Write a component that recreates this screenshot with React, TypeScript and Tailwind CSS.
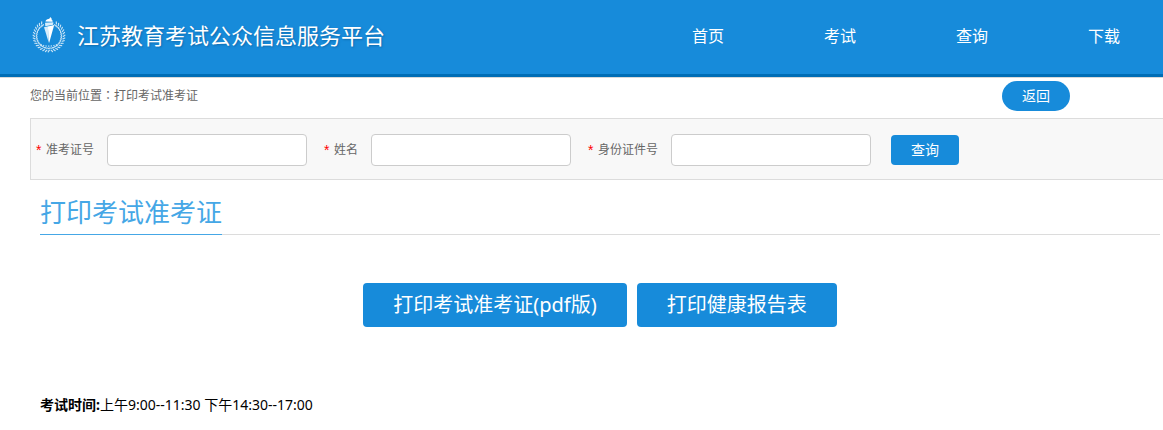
import { FormEvent, useState } from "react";

type Field = {
  id: string;
  label: string;
};

const navItems = ["首页", "考试", "查询", "下载"];

const fields: Field[] = [
  { id: "ticket", label: "准考证号" },
  { id: "name", label: "姓名" },
  { id: "idCard", label: "身份证件号" },
];

const leafAngles = Array.from({ length: 31 }, (_, i) => 30 + i * 10);

function Emblem() {
  return (
    <svg viewBox="0 0 36 38" className="h-[38px] w-9 shrink-0" fill="none" aria-hidden="true">
      <g stroke="#fff" strokeLinecap="round" opacity="0.75">
        {leafAngles.map((angle) => (
          <path
            key={angle}
            transform={`rotate(${angle} 18 20)`}
            d={angle < 180 ? "M18.4 5.8l-1.2-1.7M17.2 7.4l1.4.5" : "M17.6 5.8l1.2-1.7M18.8 7.4l-1.4.5"}
            strokeWidth="1.2"
          />
        ))}
      </g>
      <path d="M9.5 28.2c5 2.6 12 2.6 17 0" stroke="#fff" strokeWidth="1.2" strokeDasharray="1.4 1.2" opacity="0.7" />
      <path d="M14.4 5.6c.4-1.6 1.6-2.1 3-2.5 1.2-.4 1.7-1.1 1.6-2 1.6.8 2 2 1.7 2.8 1.1.1 1.1 1.1.8 1.9z" fill="#fff" />
      <path d="M14 6.8l8.4-.5-.3 2.4-7.8 1.6z" fill="#d7edfb" />
      <path d="M13 11.2l4.4-.9.5 16.7z" fill="#d7edfb" />
      <path d="M16.9 10.4l6.3-1.4-5.1 18z" fill="#fff" />
    </svg>
  );
}

export default function App() {
  const [values, setValues] = useState<Record<string, string>>({});

  function handleSubmit(event: FormEvent<HTMLFormElement>) {
    event.preventDefault();
  }

  return (
    <div className="bg-white font-['Noto_Sans','Noto_Sans_CJK_SC',sans-serif] text-sm text-black" lang="zh-CN">
      <header className="flex h-[78px] items-start justify-between border-b border-[#d9d9d9] bg-[#178bda] pr-[43px] pl-[31px] shadow-[inset_0_-3px_0_#006db5]">
        <div className="flex items-center gap-[10px] pt-4 text-white">
          <Emblem />
          <h1 className="text-[22px] leading-9 whitespace-nowrap [text-shadow:1px_1px_2px_#0f6cae]">
            江苏教育考试公众信息服务平台
          </h1>
        </div>
        <nav className="flex gap-[100px] text-base leading-[72px] whitespace-nowrap text-white">
          {navItems.map((item) => (
            <a key={item} href="#">
              {item}
            </a>
          ))}
        </nav>
      </header>

      <div className="flex h-10 items-start justify-between pt-[3px] pr-[93px] pl-[30px]">
        <p className="text-xs leading-[28px] text-[#666]">
          您的当前位置<span className="font-['Noto_Sans_CJK_TC',sans-serif]" lang="zh-TW">：</span>打印考试准考证
        </p>
        <button type="button" className="h-[30px] w-[68px] rounded-full bg-[#178bda] text-white">
          返回
        </button>
      </div>

      <form
        onSubmit={handleSubmit}
        className="ml-[30px] flex items-center border border-r-0 border-[#dcdcdc] bg-[#f8f8f8] pt-[15px] pb-[13px] pl-[5px]"
      >
        {fields.map((field) => (
          <div key={field.id} className="mr-[17px] flex items-center">
            <label htmlFor={field.id} className="flex items-center text-xs whitespace-nowrap text-[#666]">
              <span className="w-[10px] font-['Liberation_Sans',sans-serif] text-sm leading-4 text-[#f00]">*</span>
              {field.label}
            </label>
            <input
              id={field.id}
              type="text"
              value={values[field.id] ?? ""}
              onChange={(event) => setValues({ ...values, [field.id]: event.target.value })}
              className="ml-[13px] h-8 w-[200px] rounded border border-[#ccc] bg-white px-2 outline-none"
            />
          </div>
        ))}
        <button type="submit" className="ml-[3px] h-[30px] w-[68px] rounded bg-[#178bda] text-white">
          查询
        </button>
      </form>

      <main className="mr-[3px] ml-10">
        <div className="mt-3 flex border-b border-[#dcdcdc]">
          <h2 className="-mb-px border-b border-b-[#45a7e6] pb-[2px] text-[26px] leading-10 text-[#45a7e6]">
            打印考试准考证
          </h2>
        </div>
        <div className="mt-12 flex justify-center gap-[10px] text-xl text-white">
          <button type="button" className="h-11 rounded bg-[#178bda] px-[30px]">
            打印考试准考证(pdf版)
          </button>
          <button type="button" className="h-11 rounded bg-[#178bda] px-[30px]">
            打印健康报告表
          </button>
        </div>
        <p className="mt-[68px] leading-5">
          <strong>考试时间:</strong>上午9:00--11:30 下午14:30--17:00
        </p>
      </main>
    </div>
  );
}
